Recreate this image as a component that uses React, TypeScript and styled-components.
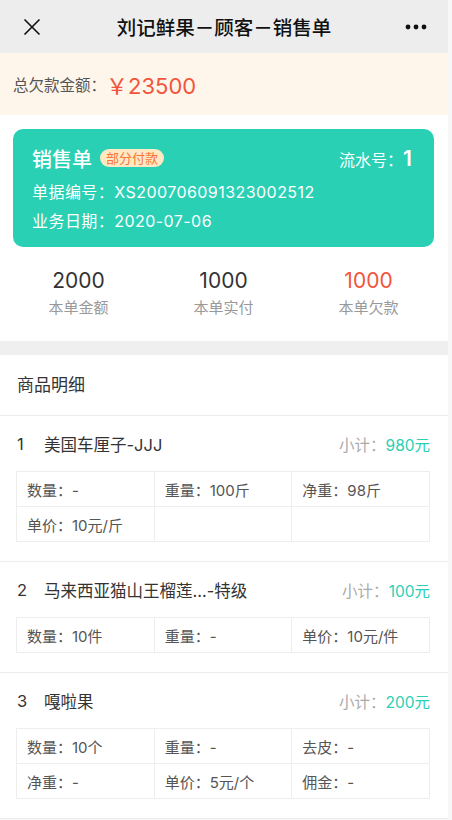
import React from "react";
import styled, { createGlobalStyle } from "styled-components";

const GlobalStyle = createGlobalStyle`
  html, body {
    margin: 0;
    padding: 0;
    background: #f7f7f7;
  }
  body {
    font-family: Inter, "Noto Sans CJK SC", sans-serif;
    color: #333;
  }
  * {
    box-sizing: border-box;
  }
`;

const Page = styled.div`
  width: 448px;
  background: #fff;
`;

const NavBar = styled.div`
  height: 53px;
  background: #ededed;
  display: grid;
  grid-template-columns: 64px 1fr 64px;
  align-items: center;

  .nav-title {
    text-align: center;
    font-size: 19.5px;
    font-weight: 500;
    color: #111;
  }

  .nav-btn {
    display: flex;
    align-items: center;
    justify-content: center;
    height: 100%;
  }
`;

const DebtBanner = styled.div`
  height: 62px;
  background: #fff6eb;
  display: flex;
  align-items: center;
  padding: 0 13px;

  .debt-label {
    font-size: 15.5px;
    color: #555;
  }

  .debt-value {
    font-size: 22px;
    color: #f2553c;
  }
`;

const SummarySection = styled.div`
  padding: 14px 0 0;
  background: #fff;
`;

const OrderCard = styled.div`
  margin: 0 14px 0 13px;
  height: 118px;
  border-radius: 10px;
  background: #2ad0b4;
  color: #fff;
  padding: 17px 22px 0 19px;
  display: flex;
  flex-direction: column;

  .card-head {
    display: flex;
    align-items: center;
    height: 24px;
    margin-bottom: 8px;
  }

  .card-title {
    font-size: 20px;
    font-weight: 500;
  }

  .card-serial {
    margin-left: auto;
    display: flex;
    align-items: baseline;
    font-size: 16px;

    b {
      font-size: 21px;
      font-weight: 600;
    }
  }

  .card-line {
    font-size: 16px;
    line-height: 29px;
    letter-spacing: 0.45px;
  }
`;

const StatusBadge = styled.span`
  margin-left: 8px;
  padding: 0 6px;
  height: 18px;
  line-height: 18px;
  border-radius: 9px;
  background: #ffe8c4;
  color: #f5773b;
  font-size: 13px;
`;

const StatsRow = styled.div`
  display: grid;
  grid-template-columns: repeat(3, 1fr);
  padding: 20px 7px 20px 6px;
`;

const StatItem = styled.div<{ $danger?: boolean }>`
  display: flex;
  flex-direction: column;
  align-items: center;

  .stat-value {
    font-size: 21px;
    line-height: 27px;
    color: ${(p) => (p.$danger ? "#f2553c" : "#333")};
  }

  .stat-label {
    font-size: 15px;
    line-height: 27px;
    color: #999;
  }
`;

const Gap = styled.div`
  height: 14px;
  background: #efefef;
`;

const SectionHeader = styled.div`
  height: 61px;
  display: flex;
  align-items: center;
  padding: 0 17px 3px;
  font-size: 17px;
  color: #333;
  border-bottom: 1px solid #ececec;
`;

const GoodsItem = styled.div`
  padding: 18px 18px 19px 16px;
  border-bottom: 1px solid #ececec;

  .goods-head {
    display: flex;
    align-items: center;
    height: 20px;
    margin-bottom: 17px;
    padding-left: 1px;
  }

  .goods-index {
    width: 27px;
    font-size: 16.5px;
    color: #333;
  }

  .goods-name {
    font-size: 16.5px;
    color: #333;
  }

  .goods-subtotal {
    margin-left: auto;
    font-size: 15.5px;
    color: #aaa;

    span {
      color: #2ad0b4;
    }
  }
`;

const DetailGrid = styled.div`
  display: grid;
  grid-template-columns: repeat(3, 1fr);
  border-top: 1px solid #eee;
  border-left: 1px solid #eee;
`;

const DetailCell = styled.div`
  height: 35px;
  display: flex;
  align-items: center;
  padding-left: 10px;
  font-size: 15px;
  color: #555;
  border-right: 1px solid #eee;
  border-bottom: 1px solid #eee;
`;

type Goods = {
  name: string;
  subtotal: string;
  fields: string[];
};

const goodsList: Goods[] = [
  {
    name: "美国车厘子-JJJ",
    subtotal: "980元",
    fields: ["数量：-", "重量：100斤", "净重：98斤", "单价：10元/斤", "", ""],
  },
  {
    name: "马来西亚猫山王榴莲...-特级",
    subtotal: "100元",
    fields: ["数量：10件", "重量：-", "单价：10元/件"],
  },
  {
    name: "嘎啦果",
    subtotal: "200元",
    fields: ["数量：10个", "重量：-", "去皮：-", "净重：-", "单价：5元/个", "佣金：-"],
  },
];

const CloseIcon = () => (
  <svg width="18" height="18" viewBox="0 0 18 18">
    <path d="M1.5 1.5 L16.5 16.5 M16.5 1.5 L1.5 16.5" stroke="#111" strokeWidth="1.6" fill="none" />
  </svg>
);

const MoreIcon = () => (
  <svg width="22" height="6" viewBox="0 0 22 6">
    <circle cx="3" cy="3" r="2.4" fill="#111" />
    <circle cx="11" cy="3" r="2.4" fill="#111" />
    <circle cx="19" cy="3" r="2.4" fill="#111" />
  </svg>
);

const App = () => {
  return (
    <Page>
      <GlobalStyle />
      <NavBar>
        <div className="nav-btn">
          <CloseIcon />
        </div>
        <div className="nav-title">刘记鲜果－顾客－销售单</div>
        <div className="nav-btn">
          <MoreIcon />
        </div>
      </NavBar>

      <DebtBanner>
        <span className="debt-label">总欠款金额：</span>
        <span className="debt-value">￥23500</span>
      </DebtBanner>

      <SummarySection>
        <OrderCard>
          <div className="card-head">
            <span className="card-title">销售单</span>
            <StatusBadge>部分付款</StatusBadge>
            <span className="card-serial">
              流水号：<b>1</b>
            </span>
          </div>
          <div className="card-line">单据编号：XS200706091323002512</div>
          <div className="card-line">业务日期：2020-07-06</div>
        </OrderCard>
        <StatsRow>
          <StatItem>
            <span className="stat-value">2000</span>
            <span className="stat-label">本单金额</span>
          </StatItem>
          <StatItem>
            <span className="stat-value">1000</span>
            <span className="stat-label">本单实付</span>
          </StatItem>
          <StatItem $danger>
            <span className="stat-value">1000</span>
            <span className="stat-label">本单欠款</span>
          </StatItem>
        </StatsRow>
      </SummarySection>

      <Gap />

      <SectionHeader>商品明细</SectionHeader>
      {goodsList.map((g, i) => (
        <GoodsItem key={g.name}>
          <div className="goods-head">
            <span className="goods-index">{i + 1}</span>
            <span className="goods-name">{g.name}</span>
            <span className="goods-subtotal">
              小计：<span>{g.subtotal}</span>
            </span>
          </div>
          <DetailGrid>
            {g.fields.map((f, j) => (
              <DetailCell key={j}>{f}</DetailCell>
            ))}
          </DetailGrid>
        </GoodsItem>
      ))}
    </Page>
  );
};

export default App;
